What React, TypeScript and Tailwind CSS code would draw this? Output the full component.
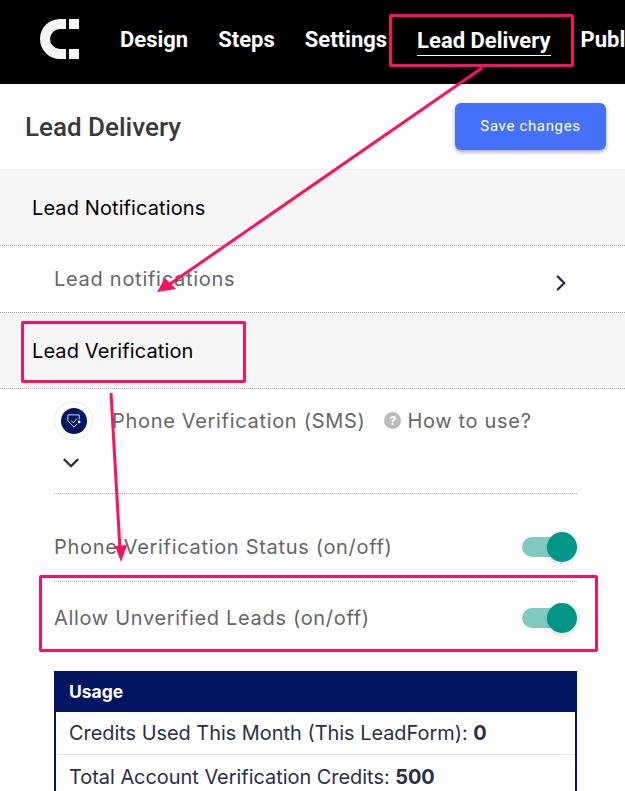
import { ChevronDown, ChevronRight } from "lucide-react";

const NAV = ["Design", "Steps", "Settings", "Lead Delivery", "Publish"];

const Toggle = () => (
  <div className="relative h-5 w-[55px] rounded-full bg-[#80cbc0]">
    <div className="absolute right-0 top-[-5px] h-[30px] w-[30px] rounded-full bg-[#009688] shadow-md" />
  </div>
);

const ToggleRow = ({ label, className }: { label: string; className: string }) => (
  <div className={`flex items-center justify-between ${className}`}>
    <span className="text-[20px] tracking-[0.68px] text-[#666]">{label}</span>
    <Toggle />
  </div>
);

const Annotations = () => (
  <>
    <div className="absolute left-[389px] top-[14px] h-[53px] w-[185px] rounded-[2px] border-[3px] border-[#ff0f62]" />
    <div className="absolute left-[21px] top-[321px] h-[62px] w-[225px] rounded-[2px] border-[3px] border-[#ff0f62]" />
    <div className="absolute left-[39px] top-[575px] h-[77px] w-[559px] rounded-[2px] border-[3px] border-[#ff0f62]" />
    <svg className="absolute left-0 top-0" width="625" height="791" fill="none">
      <path d="M482 68 L170 284" stroke="#ff0f62" strokeWidth="3" />
      <path d="M157 292 L165 278 L176 289 Z" fill="#ff0f62" />
      <path d="M111 393 L120 550" stroke="#ff0f62" strokeWidth="3" />
      <path d="M121 562 L115 546 L127 545 Z" fill="#ff0f62" />
    </svg>
  </>
);

const App = () => {
  return (
    <div className="relative h-[791px] w-[625px] overflow-hidden bg-white font-['Inter',sans-serif]">
      <header className="flex h-[84px] items-center gap-[30px] overflow-hidden bg-black pl-10 font-['Roboto',sans-serif]">
        <svg width="40" height="40" viewBox="0 0 40 40" className="mr-[10px] mt-[-6px] shrink-0">
          <path d="M26 0 H20 A20 20 0 0 0 20 40 H26 V30 H20 A10 10 0 0 1 20 10 H26 Z" fill="#f5f5f5" />
          <rect x="29" y="0" width="10" height="10" fill="#f5f5f5" />
          <rect x="29" y="30" width="10" height="10" fill="#f5f5f5" />
        </svg>
        {NAV.map((item) => (
          <span
            key={item}
            className={`shrink-0 text-[22px] font-bold leading-6 text-white ${
              item === "Lead Delivery" ? "border-b border-white pb-[2px]" : "mb-[4px]"
            }`}
          >
            {item}
          </span>
        ))}
      </header>

      <div className="flex h-[85px] items-center justify-between pl-[25px] pr-[19px] font-['Roboto',sans-serif]">
        <h1 className="mt-[2px] text-[26px] font-medium text-[#3a3a3a]">Lead Delivery</h1>
        <button className="mt-[-1px] h-[47px] w-[151px] rounded-md bg-[#4570fa] text-[15px] tracking-[0.65px] text-white shadow-[0_2px_4px_rgba(0,0,0,0.35)]">
          Save changes
        </button>
      </div>

      <div className="flex h-[77px] items-center border-y border-b-[#aaa] border-t-[#eee] [border-bottom-style:dotted] bg-[#f6f6f6] pl-8 text-[20px] tracking-[0.1px] text-black">
        Lead Notifications
      </div>
      <div className="flex h-[67px] items-center justify-between border-b border-dotted border-[#aaa] pl-[54px] pr-[51px]">
        <span className="text-[20px] tracking-[0.72px] text-[#666]">Lead notifications</span>
        <ChevronRight size={26} strokeWidth={2.25} className="mt-[7px] text-[#2a2f3d]" />
      </div>
      <div className="flex h-[76px] items-center border-b border-dotted border-[#aaa] bg-[#f6f6f6] pl-8 text-[20px] tracking-[0.1px] text-black">
        Lead Verification
      </div>

      <div className="px-[48px] pl-[54px]">
        <div className="h-[105px] border-b border-dotted border-[#aaa]">
          <div className="flex items-center pt-[12px]">
            <div className="flex h-[39px] w-[39px] items-center justify-center rounded-full border border-[#e8e8f0] bg-white">
              <div className="flex h-[26px] w-[26px] items-center justify-center rounded-full bg-[#011560]">
                <svg width="16" height="16" viewBox="0 0 17 17" fill="none" stroke="#dfe3f5" strokeWidth="1">
                  <path d="M14 7 V2 H2 V8.5 L8.5 15 L12 11.5" />
                  <path d="M5.5 8 L8 10.5 L11.5 6" />
                  <circle cx="14" cy="9.5" r="1.4" fill="#ffffff" stroke="none" />
                </svg>
              </div>
            </div>
            <span className="ml-[19px] text-[20px] tracking-[0.68px] text-[#666]">Phone Verification (SMS)</span>
            <span className="ml-[19px] flex h-[17px] w-[17px] items-center justify-center rounded-full bg-[#bbb] text-[12px] font-bold text-white">
              ?
            </span>
            <span className="ml-[6px] text-[20px] tracking-[0.68px] text-[#666]">How to use?</span>
          </div>
          <ChevronDown size={26} strokeWidth={2.25} className="ml-[4px] mt-[10px] text-[#2a2f3d]" />
        </div>
        <ToggleRow label="Phone Verification Status (on/off)" className="h-[88px] border-b border-dotted border-[#aaa] pt-[18px]" />
        <ToggleRow label="Allow Unverified Leads (on/off)" className="h-[72px]" />

        <div className="mt-[17px] border-x-2 border-[#011560] text-[19.9px] text-[#2a2f45]">
          <div className="-mx-[2px] flex h-[41px] items-center bg-[#011560] px-[15px] pt-[1px] text-[17.5px] font-bold text-white">
            Usage
          </div>
          <div className="flex h-[43px] items-center border-b border-[#e8e8e8] px-[13px] pt-[2px]">
            <span>
              Credits Used This Month (This LeadForm): <b>0</b>
            </span>
          </div>
          <div className="flex h-[43px] items-center px-[13px] pt-[2px]">
            <span>
              Total Account Verification Credits: <b>500</b>
            </span>
          </div>
        </div>
      </div>

      <Annotations />
    </div>
  );
};

export default App;
